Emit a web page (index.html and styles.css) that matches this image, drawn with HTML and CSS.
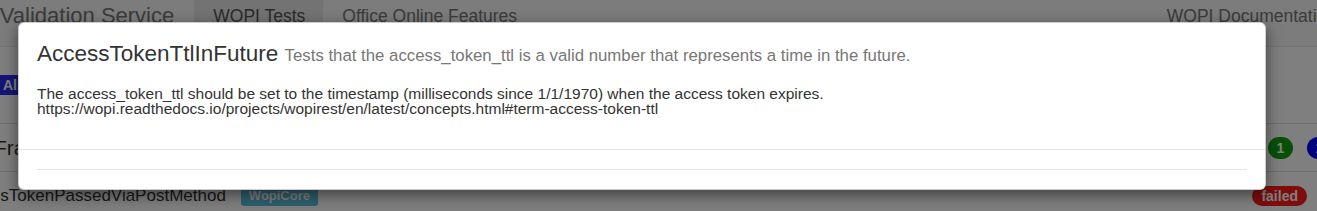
FILE: index.html
```html
<!DOCTYPE html>
<html>
    <head>
        <meta charset="utf-8">
        <title>WOPI Validation Service</title>

        <link rel="stylesheet" href="styles.css">
    </head>
    <body>

        <div class="page">
            <nav class="navbar">
                <a class="brand" href="#">WOPI Validation Service</a>
                <ul class="nav">
                    <li class="active"><a href="#">WOPI Tests</a></li>
                    <li><a href="#">Office Online Features</a></li>
                </ul>
                <a class="nav-right" href="#">WOPI Documentation</a>
            </nav>

            <div class="filters">
                <span class="filter filter-all">All</span>
            </div>

            <div class="row group-row">
                <h3 class="group-name">Framing</h3>
                <div class="counts">
                    <span class="count count-passed">1</span>
                    <span class="count count-total">1</span>
                </div>
            </div>

            <div class="row test-row">
                <span class="test-name">AccessTokenPassedViaPostMethod</span>
                <span class="tag tag-info">WopiCore</span>
                <span class="result result-failed">failed</span>
            </div>
        </div>

        <div class="backdrop"></div>

        <div class="modal">
            <div class="modal-header">
                <h3 class="modal-title">AccessTokenTtlInFuture <small>Tests that the access_token_ttl is a valid number that represents a time in the future.</small></h3>
            </div>
            <div class="modal-body">
                <p>The access_token_ttl should be set to the timestamp (milliseconds since 1/1/1970) when the access token expires.<br>https://wopi.readthedocs.io/projects/wopirest/en/latest/concepts.html#term-access-token-ttl</p>
            </div>
            <div class="modal-footer">
                <hr>
            </div>
        </div>

    </body>
</html>
```

FILE: styles.css
```css
/* Page behind the modal */

body {
    margin: 0;
    width: 1317px;
    height: 211px;
    overflow: hidden;
    position: relative;
    font-family: "Liberation Sans", Arial, sans-serif;
    color: #333;
    background: #fff;
}

.page {
    width: 1353px;
}

.navbar {
    display: flex;
    align-items: flex-start;
    height: 46px;
    border-bottom: 1px solid #e7e7e7;
    background: #f8f8f8;
}

.navbar a {
    text-decoration: none;
}

.brand {
    margin-left: -65px;
    padding: 4px 20px 0 0;
    font-size: 22px;
    line-height: 24px;
    color: #777;
}

.nav {
    display: flex;
    margin: 0;
    padding: 0;
    list-style: none;
}

.nav li a {
    display: block;
    height: 42px;
    padding: 4px 18px 0 19px;
    font-size: 17.5px;
    line-height: 24px;
    color: #777;
}

.nav li.active a {
    background: #e7e7e7;
    color: #555;
}

.nav-right {
    margin-left: auto;
    padding: 4px 17px 0;
    font-size: 17.5px;
    line-height: 24px;
    color: #777;
}

/* Filters */

.filters {
    display: flex;
    align-items: center;
    height: 76px;
    border-bottom: 1px solid #ddd;
}

.filter {
    margin-left: -3px;
    padding: 0 6px;
    height: 20px;
    line-height: 20px;
    font-size: 14px;
    font-weight: bold;
    color: #fff;
    border-radius: 3px;
}

.filter-all {
    background: #2a2af0;
}

/* Rows */

.row {
    display: flex;
    align-items: center;
    height: 47px;
    padding-right: 21px;
    border-bottom: 1px solid #ddd;
}

.group-name {
    margin: 0 0 0 -6px;
    font-size: 21px;
    font-weight: normal;
}

.counts {
    display: flex;
    gap: 14px;
    margin-left: auto;
}

.count {
    display: block;
    width: 25px;
    height: 22px;
    line-height: 22px;
    border-radius: 11px;
    text-align: center;
    font-size: 14px;
    font-weight: bold;
    color: #fff;
}

.count-passed {
    background: #10a010;
}

.count-total {
    background: #0000ff;
}

.test-name {
    margin-left: -46px;
    font-size: 17px;
}

.tag {
    margin-left: 15px;
    padding: 0 8px;
    height: 21px;
    line-height: 21px;
    font-size: 13px;
    font-weight: bold;
    color: #fff;
    border-radius: 3px;
}

.tag-info {
    background: #5bc0de;
}

.result {
    margin-left: auto;
    margin-right: 25px;
    padding: 0 9px;
    height: 20px;
    line-height: 20px;
    font-size: 14px;
    font-weight: bold;
    color: #fff;
    border-radius: 10px;
}

.result-failed {
    background: #ff1a1a;
}

/* Modal */

.backdrop {
    position: absolute;
    left: 0;
    top: 0;
    width: 100%;
    height: 100%;
    background: rgba(0, 0, 0, 0.5);
}

.modal {
    position: absolute;
    left: 18px;
    top: 22px;
    width: 1248px;
    box-sizing: border-box;
    border: 1px solid rgba(0, 0, 0, 0.2);
    border-radius: 6px;
    background: #fff;
    box-shadow: 0 5px 15px rgba(0, 0, 0, 0.5);
}

.modal-header {
    padding: 18px 18px 0;
}

.modal-title {
    margin: 0;
    font-size: 22.5px;
    line-height: 26px;
    font-weight: normal;
    color: #333;
}

.modal-title small {
    font-size: 16.8px;
    color: #777;
}

.modal-body {
    padding: 17px 18px 33px;
}

.modal-body p {
    margin: 0;
    font-size: 15.5px;
    line-height: 15px;
}

.modal-footer {
    padding: 19px 18px 19px;
    border-top: 1px solid #e5e5e5;
}

.modal-footer hr {
    margin: 0;
    border: 0;
    border-top: 1px solid #e5e5e5;
}
```
